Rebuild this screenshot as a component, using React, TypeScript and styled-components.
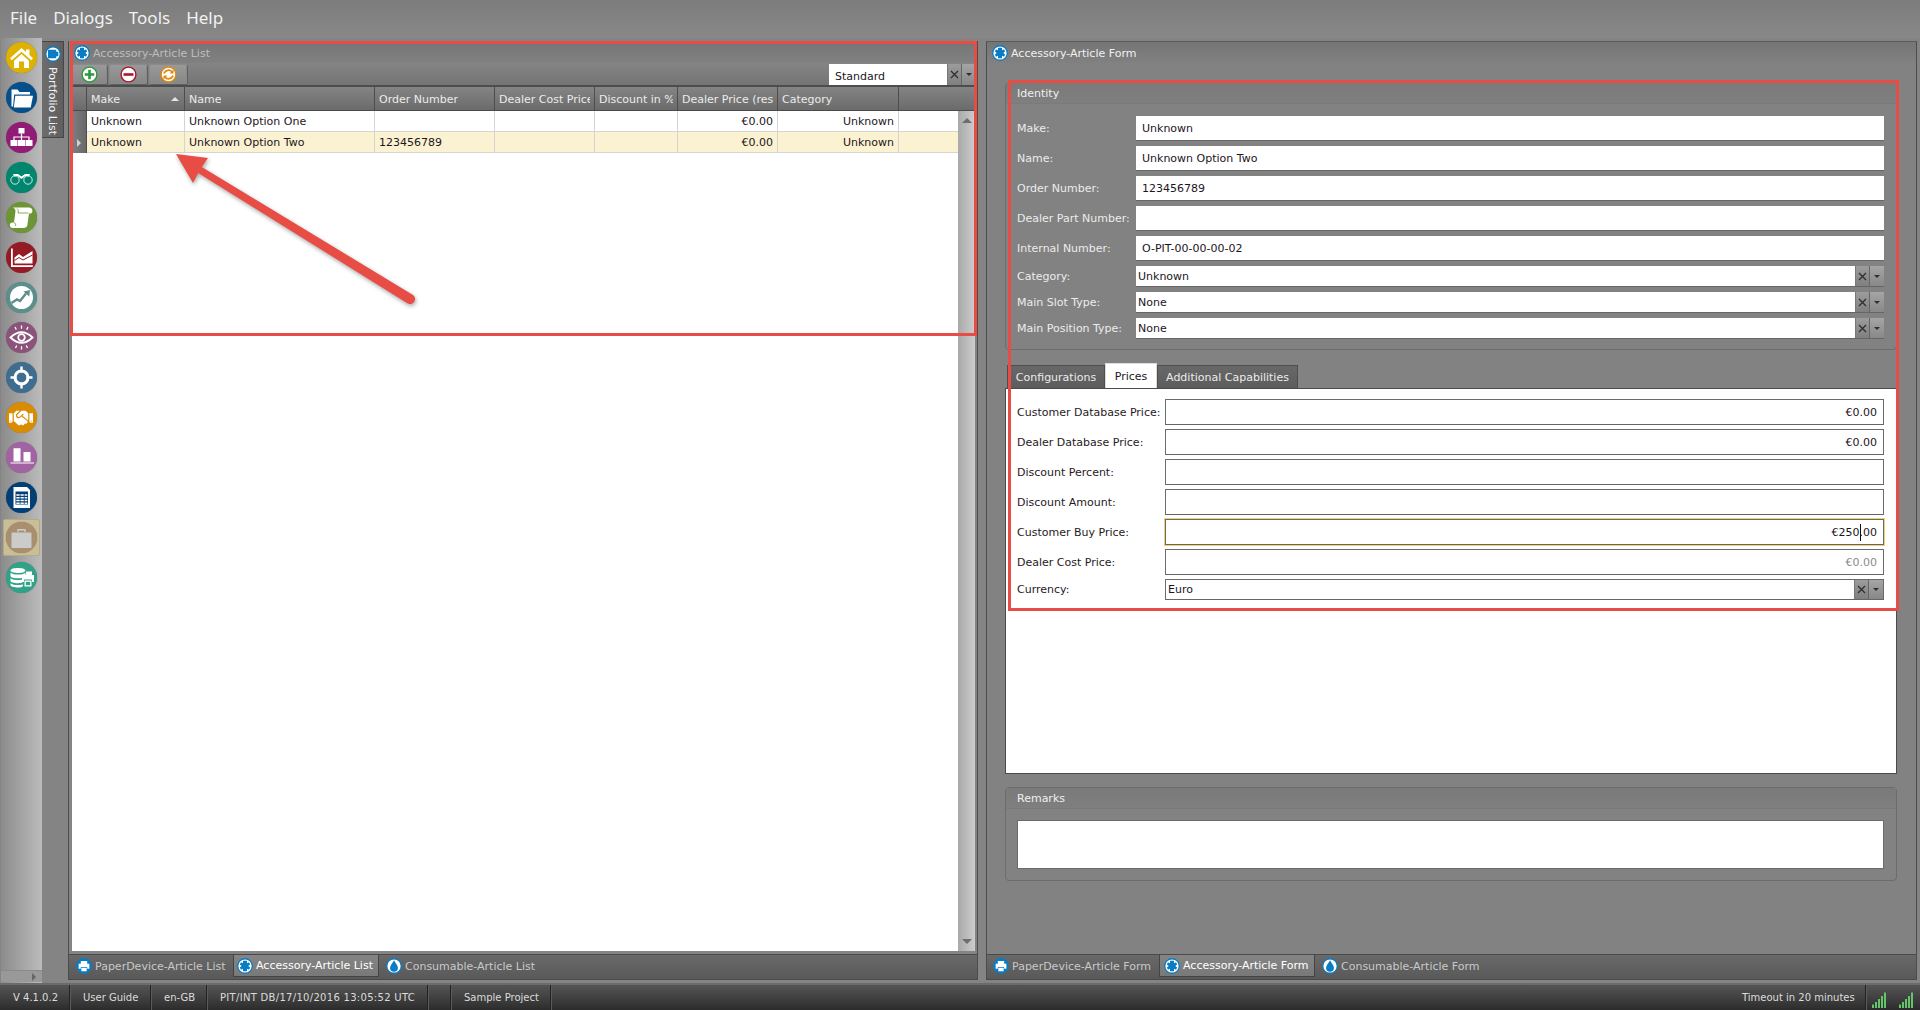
import React from 'react';
import styled, { createGlobalStyle, css } from 'styled-components';
import { FaHandshake } from 'react-icons/fa';

const GlobalStyle = createGlobalStyle`
  html, body { margin: 0; padding: 0; width: 1920px; height: 1010px; overflow: hidden; background: #848484; }
  * { box-sizing: border-box; }
  #root { width: 1920px; height: 1010px; }
`;

const Shell = styled.div`
  position: relative;
  width: 1920px;
  height: 1010px;
  display: flex;
  flex-direction: column;
  overflow: hidden;
  background: #848484;
  font-family: "DejaVu Sans", "Liberation Sans", sans-serif;
  font-size: 11px;
  letter-spacing: 0;
  color: #1c1622;
`;

const MenuBar = styled.div`
  height: 38px;
  flex: none;
  display: flex;
  align-items: center;
  gap: 16px;
  padding: 0 0 4px 10px;
  background: linear-gradient(#7c7c7c, #888888);
`;
const MenuItem = styled.span`
  font-family: "Noto Sans", "Liberation Sans", sans-serif;
  font-size: 17px;
  color: #f1f1f1;
`;

const Main = styled.div`
  flex: 1;
  min-height: 0;
  display: flex;
`;

const Rail = styled.div`
  width: 41px;
  flex: none;
  margin-left: 1px;
  display: flex;
  flex-direction: column;
  background: linear-gradient(90deg, #8b8b8b, #bcbcbc);
`;
const RailIcons = styled.div`
  flex: 1;
  display: flex;
  flex-direction: column;
  align-items: center;
  gap: 9px;
  padding-top: 4px;
  margin-right: 1px;
`;
const RailSlot = styled.div<{ $active?: boolean }>`
  width: 37px;
  height: 31px;
  display: flex;
  align-items: center;
  justify-content: center;
  ${p => p.$active && css`
    height: 37px;
    margin: -3px 0;
    border-radius: 2px;
    background: #cabe96;
    border: 1px solid #b5aa83;
  `}
`;
const RailBadge = styled.div<{ $bg: string }>`
  width: 31px;
  height: 31px;
  flex: none;
  border-radius: 50%;
  background: ${p => p.$bg};
  box-shadow: 0 0 1px #6f6f6f;
  color: #fff;
  display: flex;
  align-items: center;
  justify-content: center;
  svg { display: block; }
`;
const RailScroll = styled.div`
  height: 12px;
  flex: none;
  margin-bottom: 1px;
  display: flex;
  align-items: center;
  justify-content: flex-end;
  padding-right: 6px;
  background: #999;
  border-top: 1px solid #8a8a8a;
`;
const ArrowRight = styled.i`
  width: 0;
  height: 0;
  border-left: 4px solid #666;
  border-top: 4px solid transparent;
  border-bottom: 4px solid transparent;
`;

const SideColumn = styled.div`
  width: 26px;
  flex: none;
  padding-top: 3px;
`;
const VerticalTab = styled.div`
  width: 22px;
  height: 97px;
  display: flex;
  flex-direction: column;
  align-items: center;
  gap: 5px;
  padding-top: 4px;
  background: linear-gradient(90deg, #6d6d6d, #5f5f5f);
  border: 1px solid #474747;
  border-left: none;
`;
const VerticalText = styled.span`
  writing-mode: vertical-rl;
  color: #f2f2f2;
  white-space: nowrap;
`;

const ListPanel = styled.section`
  width: 910px;
  flex: none;
  margin: 3px 0;
  display: flex;
  flex-direction: column;
  border-left: 1px solid #4c4c4c;
  border-right: 1px solid #4c4c4c;
`;
const ListInner = styled.div`
  flex: 1;
  min-height: 0;
  padding: 0 2px 0 3px;
  display: flex;
  flex-direction: column;
`;
const PanelHeader = styled.div<{ $focused?: boolean }>`
  height: ${p => (p.$focused ? 21 : 22)}px;
  flex: none;
  display: flex;
  align-items: center;
  gap: 3px;
  padding: ${p => (p.$focused ? '1px 0 0 5px' : '2px 0 0 2px')};
  background: linear-gradient(#757575, #818181);
  color: ${p => (p.$focused ? '#f0f0f0' : '#bdbdbd')};
`;
const Toolbar = styled.div`
  height: 24px;
  flex: none;
  display: flex;
  align-items: flex-start;
  gap: 2px;
  padding-top: 1px;
  background: linear-gradient(#858585, #747474);
  border-bottom: 2px solid #4d4d4d;
`;
const ToolButton = styled.button<{ $w: number }>`
  width: ${p => p.$w}px;
  height: 20px;
  padding: 0;
  border: none;
  border-radius: 2px;
  display: flex;
  align-items: center;
  justify-content: center;
  background: linear-gradient(#9a9a9a, #868686);
  box-shadow: inset 0 0 0 1px #8a8a8a, 1px 1px 0 #5f5f5f;
`;
const ToolSpacer = styled.div`
  flex: 1;
`;
const ViewCombo = styled.div`
  width: 147px;
  height: 21px;
  display: flex;
  margin-right: -1px;
`;
const ViewValue = styled.div`
  flex: 1;
  padding: 4px 0 0 6px;
  font-size: 11px;
  background: #fff;
  line-height: 17px;
`;
const ClearBtn = styled.div`
  width: 15px;
  display: flex;
  align-items: center;
  justify-content: center;
  background: linear-gradient(#9c9c9c, #7f7f7f);
  border-right: 1px solid #666;
  border-left: 1px solid #777;
  color: #2e2e2e;
`;
const DropBtn = styled.div`
  width: 14px;
  display: flex;
  align-items: center;
  justify-content: center;
  background: linear-gradient(#a5a5a5, #888);
`;
const DownTri = styled.i`
  width: 0;
  height: 0;
  border-top: 3px solid #2e2e2e;
  border-left: 3.5px solid transparent;
  border-right: 3.5px solid transparent;
`;

const columns = '15px 98px 190px 120px 100px 83px 100px 121px 1fr';

const HeadRow = styled.div`
  height: 24px;
  flex: none;
  display: grid;
  grid-template-columns: ${columns};
  background: linear-gradient(#848484, #6b6b6b);
  border-bottom: 1px solid #4b4b4b;
`;
const HeadCell = styled.div`
  position: relative;
  display: flex;
  align-items: center;
  padding: 1px 4px 0 4px;
  min-width: 0;
  color: #ececec;
  border-right: 1px solid #4d4d4d;
  &:last-child { border-right: none; }
`;
const HeadLabel = styled.span`
  display: block;
  min-width: 0;
  overflow: hidden;
  white-space: nowrap;
`;
const SortMark = styled.i`
  position: absolute;
  right: 5px;
  top: 10px;
  width: 0;
  height: 0;
  border-bottom: 4px solid #e4e4e4;
  border-left: 4px solid transparent;
  border-right: 4px solid transparent;
`;
const GridBody = styled.div`
  flex: 1;
  min-height: 0;
  display: flex;
  background: #fff;
`;
const RowsArea = styled.div`
  flex: 1;
  background: #fff;
`;
const DataRow = styled.div<{ $selected?: boolean }>`
  height: 21px;
  display: grid;
  grid-template-columns: ${columns};
  background: ${p => (p.$selected ? '#fbf2d2' : '#fff')};
  border-bottom: 1px solid #d4d4d4;
`;
const RowMarker = styled.div`
  display: flex;
  align-items: center;
  justify-content: center;
  background: linear-gradient(90deg, #7e7e7e, #696969);
  border-right: 1px solid #4d4d4d;
  margin-bottom: -1px;
`;
const DataCell = styled.div<{ $right?: boolean }>`
  display: flex;
  align-items: center;
  justify-content: ${p => (p.$right ? 'flex-end' : 'flex-start')};
  padding: 0 4px;
  white-space: nowrap;
  overflow: hidden;
  border-right: 1px solid #d4d4d4;
  &:last-child { border-right: none; }
`;
const MarkerTri = styled.i`
  width: 0;
  height: 0;
  border-left: 4px solid #d0d0d0;
  border-top: 4px solid transparent;
  border-bottom: 4px solid transparent;
`;
const ScrollTrack = styled.div`
  width: 17px;
  flex: none;
  display: flex;
  flex-direction: column;
  align-items: center;
  justify-content: space-between;
  padding: 7px 0;
  background: linear-gradient(90deg, #a9a9a9, #cdcdcd);
`;
const UpTri = styled.i`
  width: 0;
  height: 0;
  border-bottom: 5px solid #6e6e6e;
  border-left: 5px solid transparent;
  border-right: 5px solid transparent;
`;
const DownTriLg = styled.i`
  width: 0;
  height: 0;
  border-top: 5px solid #6e6e6e;
  border-left: 5px solid transparent;
  border-right: 5px solid transparent;
`;

const BottomTabs = styled.div`
  height: 26px;
  flex: none;
  display: flex;
  align-items: flex-start;
  background: linear-gradient(#696969, #595959);
  border-top: 1px solid #4a4a4a;
  border-bottom: 1px solid #4a4a4a;
`;
const DockTab = styled.div<{ $active?: boolean; $w: number; $pad: number }>`
  width: ${p => p.$w}px;
  height: 22px;
  flex: none;
  display: flex;
  align-items: center;
  gap: 3px;
  padding-left: ${p => p.$pad}px;
  white-space: nowrap;
  color: ${p => (p.$active ? '#fff' : '#c9c9c9')};
  background: ${p => (p.$active ? 'linear-gradient(#848484, #797979)' : 'transparent')};
  border-left: ${p => (p.$active ? '1px solid #444' : 'none')};
  border-right: ${p => (p.$active ? '1px solid #444' : 'none')};
  border-bottom: ${p => (p.$active ? '1px solid #444' : 'none')};
`;
const ListTabGap = styled.div`
  height: 3px;
  flex: none;
`;

const FormPanel = styled.section`
  width: 931px;
  flex: none;
  margin: 3px 3px 3px 8px;
  display: flex;
  flex-direction: column;
  border: 1px solid #4c4c4c;
  border-top-color: #5a5a5a;
  border-bottom: none;
`;
const FormBody = styled.div`
  flex: 1;
  min-height: 0;
  padding: 19px 19px 0 18px;
  background: #828282;
  display: flex;
  flex-direction: column;
`;
const GroupBox = styled.div`
  flex: none;
  border: 1px solid #6c6c6c;
  border-radius: 4px;
`;
const GroupTitle = styled.div`
  height: 21px;
  display: flex;
  align-items: center;
  padding-left: 11px;
  color: #f0f0f0;
  background: linear-gradient(#7a7a7a, #7f7f7f);
  border-bottom: 1px solid #7a7a7a;
`;
const IdentityFields = styled.div`
  padding: 12px 12px 10px 11px;
  display: flex;
  flex-direction: column;
  gap: 5px;
`;
const FieldRow = styled.div<{ $labelW: number }>`
  display: grid;
  grid-template-columns: ${p => p.$labelW}px 1fr;
  align-items: center;
`;
const FieldLabel = styled.label<{ $dark?: boolean }>`
  color: ${p => (p.$dark ? '#1f1a24' : '#ececec')};
  white-space: nowrap;
`;
const TextBox = styled.div<{ $tall?: boolean; $right?: boolean; $focus?: boolean; $muted?: boolean; $light?: boolean }>`
  height: ${p => (p.$tall ? 26 : 25)}px;
  display: flex;
  align-items: center;
  justify-content: ${p => (p.$right ? 'flex-end' : 'flex-start')};
  padding: 0 6px;
  background: #fff;
  color: ${p => (p.$muted ? '#8a8a8a' : '#1c1622')};
  border: ${p => (p.$light ? 'none' : '1px solid #6b6b6b')};
  border-bottom: 1px solid #666;
  ${p => p.$focus && css`
    box-shadow: 0 0 0 1px #f2d06b;
  `}
`;
const ComboBox = styled.div<{ $outlined?: boolean }>`
  height: 21px;
  display: flex;
  background: #fff;
  border: ${p => (p.$outlined ? '1px solid #6b6b6b' : 'none')};
  border-bottom: 1px solid #666;
`;
const ComboValue = styled.div`
  flex: 1;
  display: flex;
  align-items: center;
  padding-left: 2px;
`;
const Caret = styled.i`
  display: inline-block;
  width: 1px;
  height: 17px;
  margin: 0 -1px 0 0;
  background: #111;
`;
const TabStrip = styled.div`
  flex: none;
  margin-top: 13px;
  height: 25px;
  display: flex;
  align-items: flex-end;
  padding-left: 2px;
`;
const PageTab = styled.div<{ $active?: boolean; $w: number }>`
  width: ${p => p.$w}px;
  height: ${p => (p.$active ? 25 : 23)}px;
  display: flex;
  align-items: center;
  justify-content: center;
  color: ${p => (p.$active ? '#1c1622' : '#ececec')};
  background: ${p => (p.$active ? '#fff' : 'linear-gradient(#686868, #5d5d5d)')};
  border: 1px solid #4e4e4e;
  border-bottom: none;
  ${p => p.$active && 'border-color:#dcdcdc;border-bottom:none;'}
`;
const TabPage = styled.div`
  flex: none;
  height: 386px;
  padding: 10px 12px 0 11px;
  background: #fff;
  border: 1px solid #4a4a4a;
  display: flex;
  flex-direction: column;
  gap: 4px;
`;
const RemarksBox = styled(GroupBox)`
  margin-top: 13px;
`;
const RemarksBody = styled.div`
  padding: 11px 12px 11px 11px;
`;
const RemarksArea = styled.div`
  height: 49px;
  background: #fff;
  border: 1px solid #6b6b6b;
`;
const FormSpacer = styled.div`
  flex: 1;
`;

const StatusBar = styled.footer`
  height: 27px;
  flex: none;
  display: flex;
  align-items: center;
  background: linear-gradient(#555, #2c2c2c);
  border-top: 2px solid #6a6a6a;
  color: #dcdcdc;
  font-size: 10px;
`;
const StatusCell = styled.div<{ $w: number; $track?: number }>`
  width: ${p => p.$w}px;
  flex: none;
  height: 100%;
  display: flex;
  align-items: center;
  padding-left: 13px;
  white-space: nowrap;
  letter-spacing: ${p => p.$track ?? 0}px;
  border-right: 1px solid #222;
  box-shadow: 1px 0 0 #5b5b5b;
`;
const StatusFill = styled.div`
  flex: 1;
`;
const StatusText = styled.div`
  width: 124px;
  height: 100%;
  flex: none;
  display: flex;
  align-items: center;
  white-space: nowrap;
  border-right: 1px solid #222;
  box-shadow: 1px 0 0 #5b5b5b;
`;
const SignalWrap = styled.div`
  width: 27px;
  height: 100%;
  flex: none;
  padding: 7px 0 3px 6px;
  svg { display: block; }
`;

const RedBox = styled.div<{ $l: number; $t: number; $w: number; $h: number }>`
  position: absolute;
  left: ${p => p.$l}px;
  top: ${p => p.$t}px;
  width: ${p => p.$w}px;
  height: ${p => p.$h}px;
  border: 3px solid #e84d45;
  pointer-events: none;
`;
const ArrowOverlay = styled.svg`
  position: absolute;
  left: 170px;
  top: 150px;
  filter: drop-shadow(1px 2px 2px rgba(0, 0, 0, 0.35));
  pointer-events: none;
`;

const W = '#fff';
const railIcons: { bg: string; active?: boolean; svg: React.ReactNode }[] = [
  { bg: '#dfb100', svg: (
    <svg width="31" height="31" viewBox="0 0 31 31"><path fill={W} d="M15.5 6 4 16.2l1.8 2 9.7-8.4 9.7 8.4 1.8-2-3.5-3.2V7.500H20v2.400z" /><path fill={W} d="M8 18.800 15.500 12l7.500 6.800V26h-5v-6.500h-5V26H8z" /></svg>
  ) },
  { bg: '#05508a', svg: (
    <svg width="31" height="31" viewBox="0 0 31 31"><path fill={W} d="M5.500 7.500h6l2 2.500H24v2.500H8.200L7 24.500H5.500z" /><path fill={W} d="M9.300 13.800H27l-2.300 11.700H7.800z" /></svg>
  ) },
  { bg: '#911c75', svg: (
    <svg width="31" height="31" viewBox="0 0 31 31"><path fill={W} d="M12.500 6h6v5.500h-6zM4.500 18h7v6h-7zM12 18h7v6h-7zM19.500 18h7v6h-7z" /><path fill="none" stroke={W} strokeWidth="1.200" d="M15.500 11.500V18M8 18v-3h15v3" /></svg>
  ) },
  { bg: '#00866f', svg: (
    <svg width="31" height="31" viewBox="0 0 31 31"><g fill="none" stroke={W} strokeWidth=".8"><circle cx="9" cy="18" r="4.200" /><circle cx="22" cy="18" r="4.200" /></g><path fill={W} d="M7 12h5l3.500 2.500L19 12h5l-1 2.500-3.500-.5-4 3-4-3-3.500.5z" /></svg>
  ) },
  { bg: '#6e9535', svg: (
    <svg width="31" height="31" viewBox="0 0 31 31"><path fill={W} d="M7 5.500h16.500a3.300 3.300 0 0 1 1.500 6l-2 0L21.500 22a4 4 0 0 1-3.500 4H7a2.800 2.800 0 0 1-1-5.500h2L9.500 9C9.500 7.500 8.500 6.500 7 5.500z" /><path fill="none" stroke="#6e9535" strokeWidth=".8" d="M11 6.500c1.500 1 1.500 3 1 4.500h10.500M8 20.500c1.500.5 2 2 1.500 3.500" /></svg>
  ) },
  { bg: '#941b26', svg: (
    <svg width="31" height="31" viewBox="0 0 31 31"><path fill={W} d="M5 6.500h1.800v16.700h20V25H5z" /><path fill={W} d="M8.500 15.500 13 12l4 3 9.500-6v12.500h-18z" /><path fill="none" stroke="#941b26" strokeWidth="1" d="m8.500 18.500 4.500-3 4 2.500 9.500-5" /></svg>
  ) },
  { bg: '#5b8f8c', svg: (
    <svg width="31" height="31" viewBox="0 0 31 31"><circle cx="15.500" cy="15.500" r="11.500" fill={W} /><path fill="none" stroke="#5b8f8c" strokeWidth="2.400" d="m5.500 21 5.500-3.500 3 1.500 6-7.500" /><path fill="#5b8f8c" d="m17.500 9.500 6.500-1.500-.8 6.500z" /></svg>
  ) },
  { bg: '#8b5379', svg: (
    <svg width="31" height="31" viewBox="0 0 31 31"><path fill="none" stroke={W} strokeWidth="1.800" d="M4.500 15.500Q15.500 5 26.500 15.500 15.500 26 4.500 15.500z" /><circle cx="15.500" cy="15.500" r="3.300" fill="none" stroke={W} strokeWidth="1.800" /><path stroke={W} strokeWidth="1.300" d="M15.500 3.500v3.200M9 5l1.300 2.600M22 5l-1.300 2.600M15.500 24.300v3.200M9.500 26l1.200-2.600M21.500 26l-1.200-2.600" /></svg>
  ) },
  { bg: '#3e6d8f', svg: (
    <svg width="31" height="31" viewBox="0 0 31 31"><circle cx="15.500" cy="15.500" r="6.500" fill="none" stroke={W} strokeWidth="3" /><path stroke={W} strokeWidth="2.400" d="M15.500 4.500v6M15.500 20.500v6M4.500 15.500h6M20.500 15.500h6" /></svg>
  ) },
  { bg: '#d98c00', svg: <FaHandshake size={24} color={W} /> },
  { bg: '#a263a2', svg: (
    <svg width="31" height="31" viewBox="0 0 31 31"><path fill={W} d="M7.500 6.300h7v13.300h-7zM17.500 10h7v9.600h-7zM4.500 20.600H28v1H4.500z" /></svg>
  ) },
  { bg: '#013f74', svg: (
    <svg width="31" height="31" viewBox="0 0 31 31"><path fill={W} d="M7.500 5h13.500l3 3v18H7.500z" /><path fill="#013f74" d="M9.500 9.500h12.500v13H9.500z" /><path fill={W} d="M10.300 12.300h3.400v1.500h-3.400zM14.500 12.300h3.300v1.500h-3.300zM18.600 12.300h2.700v1.500h-2.700zM10.300 15h3.400v1.500h-3.400zM14.500 15h3.300v1.500h-3.300zM18.600 15h2.700v1.500h-2.700zM10.300 17.700h3.400v1.500h-3.400zM14.500 17.700h3.300v1.500h-3.300zM18.600 17.700h2.700v1.500h-2.700zM10.300 20.400h3.400v1.500h-3.400zM14.500 20.400h3.300v1.500h-3.300zM18.600 20.400h2.700v1.500h-2.700z" /></svg>
  ) },
  { bg: '#a98f6e', active: true, svg: (
    <svg width="31" height="31" viewBox="0 0 31 31"><path fill="#cbcbcb" d="M6.500 10.500h18a1 1 0 0 1 1 1V25a1 1 0 0 1-1 1h-18a1 1 0 0 1-1-1V11.500a1 1 0 0 1 1-1z" /><path fill="none" stroke="#cbcbcb" strokeWidth="1.400" d="M12 10V7.800h7V10" /></svg>
  ) },
  { bg: '#2fa288', svg: (
    <svg width="31" height="31" viewBox="0 0 31 31"><path fill={W} d="M4.500 8.500C4.500 6.800 8.500 6 12 6s7.500.8 7.500 2.500S15.500 11 12 11 4.500 10.200 4.500 8.500zM4.500 10.800C6 12.200 9 12.500 12 12.500s6-.3 7.500-1.700V14c0 1.500-4 2.300-7.500 2.300S4.500 15.500 4.500 14zM4.500 16.300C6 17.700 9 18 12 18s4-.2 5-.5V20c-1 .8-3 1.200-5 1.200-3.500 0-7.500-.8-7.500-2.200zM4.500 21.300C6 22.700 9 23 12 23s4-.2 5-.5V24c-1 1-3 1.500-5 1.500-3.500 0-7.500-.9-7.500-2.500z" /><path fill={W} d="M20 9.500h6V13h2v7h-2v-2.500h-8V20h-2v-7h4zM18.500 18.500h7v6h-7z" /><path fill="#2fa288" d="M19.800 19.800h4.400v3.400h-4.400z" /></svg>
  ) },
];

const Blue = '#0a7cc1';
type TabKind = 'printer' | 'puzzle' | 'drop' | 'case';
const PaneIcon = ({ kind }: { kind: TabKind }) => (
  <svg width="16" height="16" viewBox="0 0 15 15" style={{ flex: 'none' }}>
    <circle cx="7.500" cy="7.500" r="7.400" fill={Blue} />
    {kind === 'printer' && (
      <path fill="#fff" d="M4.500 2.800h6v2.700h2V10h-2V8.500h-6V10h-2V5.500h2zM5 9.200h5V12.500H5z" />
    )}
    {kind === 'puzzle' && (
      <>
        <circle cx="7.500" cy="7.500" r="6.200" fill="#fff" />
        <path fill={Blue} d="M5.600 2.600h3.800v2.400l1.900-1 1 2-1.700 1.500 1.700 1.500-1 2-1.900-1v2.400H5.600V10l-1.900 1-1-2 1.700-1.500L2.700 6l1-2 1.900 1z" />
      </>
    )}
    {kind === 'drop' && (
      <>
        <circle cx="7.500" cy="7.500" r="6.200" fill="#fff" />
        <path fill={Blue} d="M7.500 2C9 4.800 11.200 7 11.200 9.200a3.700 3.700 0 0 1-7.400 0C3.800 7 6 4.800 7.500 2z" />
      </>
    )}
    {kind === 'case' && (
      <>
        <circle cx="7.500" cy="7.500" r="6.200" fill="#fff" />
        <path fill={Blue} d="M2.800 3.500h7.700v8H2.800zM10.500 5.500H12.500v4h-2z" />
      </>
    )}
  </svg>
);

const ToolIcon = ({ color, kind }: { color: string; kind: 'plus' | 'minus' | 'refresh' }) => (
  <svg width="17" height="17" viewBox="0 0 17 17">
    <circle cx="8.500" cy="8.500" r="7.400" fill="#fff" stroke={color} strokeWidth="1.400" />
    {kind === 'plus' && <path fill={color} d="M7.200 3.700h2.600v3.500h3.500v2.600H9.800v3.500H7.200V9.800H3.700V7.200h3.500z" />}
    {kind === 'minus' && <path fill={color} d="M3.500 7.200h10v2.600h-10z" />}
    {kind === 'refresh' && (
      <>
        <path fill="none" stroke={color} strokeWidth="1.800" d="M4 7.500a4.700 4.700 0 0 1 8.200-1.500M13 9.500a4.700 4.700 0 0 1-8.200 1.500" />
        <path fill={color} d="M13.500 3.500v4h-4zM3.500 13.500v-4h4z" />
      </>
    )}
  </svg>
);

const XGlyph = () => (
  <svg width="9" height="9" viewBox="0 0 9 9">
    <path stroke="#2e2e2e" strokeWidth="1.300" d="m1 1 7 7M8 1 1 8" />
  </svg>
);

const Signal = () => (
  <svg width="15" height="16" viewBox="0 0 15 16">
    <path fill="#63c46a" d="M0 12.500h2V16H0zM3 10h2v6H3zM6 7h2v9H6zM9 4h2v12H9zM12 .5h2V16h-2z" />
  </svg>
);

const Combo = ({ value, outlined }: { value: string; outlined?: boolean }) => (
  <ComboBox $outlined={outlined}>
    <ComboValue>{value}</ComboValue>
    <ClearBtn><XGlyph /></ClearBtn>
    <DropBtn><DownTri /></DropBtn>
  </ComboBox>
);

const headers = ['Make', 'Name', 'Order Number', 'Dealer Cost Price', 'Discount in %', 'Dealer Price (resulting)', 'Category', ''];
const rows = [
  { make: 'Unknown', name: 'Unknown Option One', order: '' },
  { make: 'Unknown', name: 'Unknown Option Two', order: '123456789', selected: true },
];
const identityText = [
  ['Make:', 'Unknown'],
  ['Name:', 'Unknown Option Two'],
  ['Order Number:', '123456789'],
  ['Dealer Part Number:', ''],
  ['Internal Number:', 'O-PIT-00-00-00-02'],
];
const identityCombo = [
  ['Category:', 'Unknown'],
  ['Main Slot Type:', 'None'],
  ['Main Position Type:', 'None'],
];
const priceRows = [
  { label: 'Customer Database Price:', value: '€0.00' },
  { label: 'Dealer Database Price:', value: '€0.00' },
  { label: 'Discount Percent:', value: '' },
  { label: 'Discount Amount:', value: '' },
  { label: 'Customer Buy Price:', value: 'caret', focus: true },
  { label: 'Dealer Cost Price:', value: '€0.00', muted: true },
];

export default function App() {
  return (
    <Shell>
      <GlobalStyle />
      <MenuBar>
        {['File', 'Dialogs', 'Tools', 'Help'].map(m => <MenuItem key={m}>{m}</MenuItem>)}
      </MenuBar>
      <Main>
        <Rail>
          <RailIcons>
            {railIcons.map((r, i) => (
              <RailSlot key={i} $active={r.active}>
                <RailBadge $bg={r.bg}>{r.svg}</RailBadge>
              </RailSlot>
            ))}
          </RailIcons>
          <RailScroll><ArrowRight /></RailScroll>
        </Rail>
        <SideColumn>
          <VerticalTab>
            <PaneIcon kind="case" />
            <VerticalText>Portfolio List</VerticalText>
          </VerticalTab>
        </SideColumn>
        <ListPanel>
          <ListInner>
            <PanelHeader>
              <PaneIcon kind="puzzle" />
              Accessory-Article List
            </PanelHeader>
            <Toolbar>
              <ToolButton $w={35}><ToolIcon color="#2b9a3c" kind="plus" /></ToolButton>
              <ToolButton $w={38}><ToolIcon color="#a8182f" kind="minus" /></ToolButton>
              <ToolButton $w={38}><ToolIcon color="#e08a10" kind="refresh" /></ToolButton>
              <ToolSpacer />
              <ViewCombo>
                <ViewValue>Standard</ViewValue>
                <ClearBtn><XGlyph /></ClearBtn>
                <DropBtn><DownTri /></DropBtn>
              </ViewCombo>
            </Toolbar>
            <HeadRow>
              <HeadCell />
              {headers.map((h, i) => (
                <HeadCell key={i}>
                  <HeadLabel>{h}</HeadLabel>
                  {i === 0 && <SortMark />}
                </HeadCell>
              ))}
            </HeadRow>
            <GridBody>
              <RowsArea>
                {rows.map(r => (
                  <DataRow key={r.name} $selected={r.selected}>
                    <RowMarker>{r.selected && <MarkerTri />}</RowMarker>
                    <DataCell>{r.make}</DataCell>
                    <DataCell>{r.name}</DataCell>
                    <DataCell>{r.order}</DataCell>
                    <DataCell />
                    <DataCell />
                    <DataCell $right>€0.00</DataCell>
                    <DataCell $right>Unknown</DataCell>
                    <DataCell />
                  </DataRow>
                ))}
              </RowsArea>
              <ScrollTrack><UpTri /><DownTriLg /></ScrollTrack>
            </GridBody>
            <ListTabGap />
          </ListInner>
          <BottomTabs>
            <DockTab $w={164} $pad={7}><PaneIcon kind="printer" />PaperDevice-Article List</DockTab>
            <DockTab $active $w={146} $pad={3}><PaneIcon kind="puzzle" />Accessory-Article List</DockTab>
            <DockTab $w={165} $pad={7}><PaneIcon kind="drop" />Consumable-Article List</DockTab>
          </BottomTabs>
        </ListPanel>
        <FormPanel>
          <PanelHeader $focused>
            <PaneIcon kind="puzzle" />
            Accessory-Article Form
          </PanelHeader>
          <FormBody>
            <GroupBox>
              <GroupTitle>Identity</GroupTitle>
              <IdentityFields>
                {identityText.map(([l, v]) => (
                  <FieldRow key={l} $labelW={119}>
                    <FieldLabel>{l}</FieldLabel>
                    <TextBox $light>{v}</TextBox>
                  </FieldRow>
                ))}
                {identityCombo.map(([l, v]) => (
                  <FieldRow key={l} $labelW={119}>
                    <FieldLabel>{l}</FieldLabel>
                    <Combo value={v} />
                  </FieldRow>
                ))}
              </IdentityFields>
            </GroupBox>
            <TabStrip>
              <PageTab $w={98}>Configurations</PageTab>
              <PageTab $active $w={52}>Prices</PageTab>
              <PageTab $w={141}>Additional Capabilities</PageTab>
            </TabStrip>
            <TabPage>
              {priceRows.map(r => (
                <FieldRow key={r.label} $labelW={148}>
                  <FieldLabel $dark>{r.label}</FieldLabel>
                  <TextBox $tall $right $focus={r.focus} $muted={r.muted}>
                    {r.value === 'caret' ? <>€250<Caret />.00</> : r.value}
                  </TextBox>
                </FieldRow>
              ))}
              <FieldRow $labelW={148}>
                <FieldLabel $dark>Currency:</FieldLabel>
                <Combo value="Euro" outlined />
              </FieldRow>
            </TabPage>
            <RemarksBox>
              <GroupTitle>Remarks</GroupTitle>
              <RemarksBody><RemarksArea /></RemarksBody>
            </RemarksBox>
            <FormSpacer />
          </FormBody>
          <BottomTabs>
            <DockTab $w={172} $pad={6}><PaneIcon kind="printer" />PaperDevice-Article Form</DockTab>
            <DockTab $active $w={156} $pad={4}><PaneIcon kind="puzzle" />Accessory-Article Form</DockTab>
            <DockTab $w={180} $pad={7}><PaneIcon kind="drop" />Consumable-Article Form</DockTab>
          </BottomTabs>
        </FormPanel>
      </Main>
      <StatusBar>
        <StatusCell $w={70}>V 4.1.0.2</StatusCell>
        <StatusCell $w={81}>User Guide</StatusCell>
        <StatusCell $w={56}>en-GB</StatusCell>
        <StatusCell $w={221} $track={0.3}>PIT/INT DB/17/10/2016 13:05:52 UTC</StatusCell>
        <StatusCell $w={23} />
        <StatusCell $w={100}>Sample Project</StatusCell>
        <StatusFill />
        <StatusText>Timeout in 20 minutes</StatusText>
        <SignalWrap><Signal /></SignalWrap>
        <SignalWrap><Signal /></SignalWrap>
      </StatusBar>
      <RedBox $l={70} $t={41} $w={907} $h={295} />
      <RedBox $l={1008} $t={80} $w={891} $h={531} />
      <ArrowOverlay width="260" height="170" viewBox="0 0 260 170">
        <path fill="#e84d45" d="M6 4 38 8l-6.200 9 210.800 127.700a5 5 0 0 1-5.200 8.600L28.200 23 23 33z" />
      </ArrowOverlay>
    </Shell>
  );
}
